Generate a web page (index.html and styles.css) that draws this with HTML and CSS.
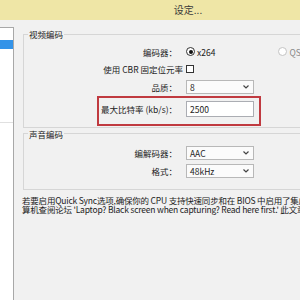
FILE: index.html
```html
<!DOCTYPE html>
<html>
	<head>
		<meta charset="utf-8">
		<title>设定...</title>
		<link rel="stylesheet" href="styles.css">
	</head>
	<body>
		<div class="window">
			<div class="titlebar">设定...</div>
			<div class="main">
				<div class="list">
					<div class="item sel"></div>
					<div class="sep"></div>
				</div>
				<div class="content">
					<fieldset class="group">
						<legend>视频编码</legend>
						<div class="form">
							<div class="row">
								<span class="lbl">编码器：</span>
								<span class="opt"><i class="radio on"></i>x264</span>
								<span class="opt off"><i class="radio"></i>QSV</span>
							</div>
							<div class="row">
								<span class="lbl wide">使用 CBR 固定位元率</span>
								<i class="check"></i>
							</div>
							<div class="row">
								<span class="lbl">品质：</span>
								<div class="select">8<svg viewBox="0 0 6 4"><polyline points="0.5,0.5 3,3 5.5,0.5"/></svg></div>
							</div>
							<div class="row hl">
								<span class="lbl">最大比特率 (kb/s)：</span>
								<div class="input">2500</div>
							</div>
						</div>
					</fieldset>
					<fieldset class="group">
						<legend>声音编码</legend>
						<div class="form audio">
							<div class="row">
								<span class="lbl">编解码器：</span>
								<div class="select">AAC<svg viewBox="0 0 6 4"><polyline points="0.5,0.5 3,3 5.5,0.5"/></svg></div>
							</div>
							<div class="row">
								<span class="lbl">格式：</span>
								<div class="select">48kHz<svg viewBox="0 0 6 4"><polyline points="0.5,0.5 3,3 5.5,0.5"/></svg></div>
							</div>
						</div>
					</fieldset>
					<div class="notes">
						<p>若要启用Quick Sync选项,确保你的 CPU 支持快速同步和在 BIOS 中启用了集成显卡。笔记本计</p>
						<p>算机查阅论坛 'Laptop? Black screen when capturing? Read here first.' 此文章。</p>
					</div>
				</div>
			</div>
		</div>
	</body>
</html>
```

FILE: styles.css
```css
*{
	margin: 0;
	padding: 0;
	box-sizing: border-box;
}
body{
	width: 300px;
	height: 300px;
	overflow: hidden;
	background: #f1f1f1;
	font-family: "Noto Sans CJK SC", sans-serif;
	font-size: 8.5px;
	color: #222;
}
.window{
	width: 376px;
	height: 300px;
	display: flex;
	flex-direction: column;
}
.titlebar{
	height: 20px;
	background: #efe6a6;
	text-align: center;
	font-size: 10px;
	line-height: 20px;
	color: #3a3a3a;
}
.main{
	flex: 1;
	display: flex;
	padding-top: 7px;
}
.list{
	width: 14px;
	background: #fff;
	border-top: 1px solid #a8a8a8;
	border-right: 1px solid #a8a8a8;
	padding-top: 12px;
}
.item{
	height: 9px;
}
.item.sel{
	background: #3393e8;
}
.sep{
	margin-top: 73px;
	border-top: 1px solid #e0e0e0;
}
.content{
	flex: 1;
	margin-left: 9px;
	padding-top: 1px;
}
.group{
	border: 1px solid #d6d6d6;
	padding: 0 0 1px;
	min-width: 0;
}
.group legend{
	margin-left: 4px;
	padding: 0 1px;
	line-height: 12px;
}
.form{
	padding: 3px 0 0 75px;
}
.form.audio{
	padding: 5px 0 8px 75px;
}
.row{
	display: flex;
	align-items: center;
	height: 17.5px;
}
.lbl{
	width: 78px;
	text-align: right;
	margin-right: 9px;
	white-space: nowrap;
}
.lbl.wide{
	width: 84px;
	margin-right: 3px;
}
.row.hl{
	height: 30px;
	width: 164px;
	margin-left: -2px;
	border: 2px solid #c03a40;
	padding-bottom: 4px;
}
.opt{
	display: flex;
	align-items: center;
}
.opt.off{
	margin-left: 63px;
	color: #888;
}
.radio{
	width: 9px;
	height: 9px;
	border: 1px solid #333;
	border-radius: 50%;
	background: #fff;
	margin-right: 2px;
	display: flex;
	align-items: center;
	justify-content: center;
}
.radio.on::after{
	content: "";
	width: 4px;
	height: 4px;
	border-radius: 50%;
	background: #111;
}
.opt.off .radio{
	border-color: #c4c4c4;
}
.check{
	width: 8px;
	height: 8px;
	border: 1px solid #333;
	background: #fff;
}
.select{
	width: 68px;
	height: 14px;
	border: 1px solid #b8b8b8;
	background: #fbfbfb;
	display: flex;
	align-items: center;
	justify-content: space-between;
	padding: 0 4px 0 3px;
}
.select svg{
	width: 6px;
	height: 4px;
	fill: none;
	stroke: #444;
	stroke-width: 1.2;
}
.input{
	width: 68px;
	height: 16px;
	border: 1px solid #abadb3;
	background: #fff;
	padding-left: 3px;
	line-height: 14px;
}
.notes{
	margin: 6px 0 0 -1px;
	line-height: 9.5px;
	letter-spacing: -0.2px;
	white-space: nowrap;
}
```
